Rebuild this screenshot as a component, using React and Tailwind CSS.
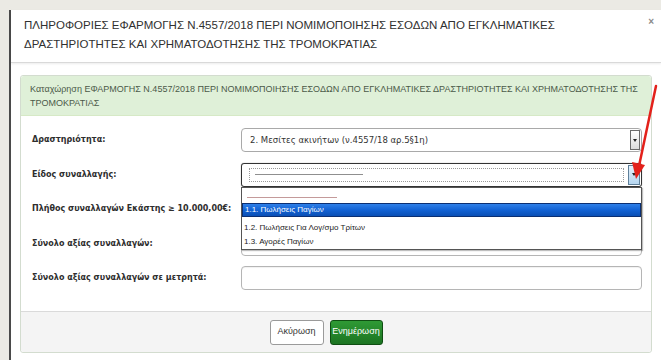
import React from "react";

const sans = { fontFamily: '"Liberation Sans", Arial, sans-serif' };
const dv = { fontFamily: '"DejaVu Sans", Verdana, sans-serif' };

function Label({ children }) {
  return (
    <div className="w-[209px] shrink-0 text-[8px] font-bold text-[#2e2e2e]" style={dv}>
      {children}
    </div>
  );
}

function Row({ label, children }) {
  return (
    <div className="flex items-center h-[24px]">
      <Label>{label}</Label>
      <div className="relative w-[401px] h-full">{children}</div>
    </div>
  );
}

function TextBox() {
  return <div className="w-full h-full rounded-[4px] border border-[#b5b5b5] bg-white shadow-[inset_0_1px_1px_rgba(0,0,0,0.06)]" />;
}

export default function App() {
  return (
    <div className="relative w-[661px] h-[360px] overflow-hidden bg-[#ebeae4] pt-[10px] pl-[9px]" style={sans}>
      <div className="w-[652px] h-[350px] bg-white border-l-2 border-[#4a4a4a] flex flex-col">
        {/* header */}
        <div className="h-[53px] shrink-0 flex justify-between pl-[13px] pr-[7px] pt-[6px] border-b border-[#d9d9d9] shadow-[0_1px_2px_rgba(0,0,0,0.08)]">
          <div className="text-[11.5px] leading-[19px] text-[#303030]">
            ΠΛΗΡΟΦΟΡΙΕΣ ΕΦΑΡΜΟΓΗΣ Ν.4557/2018 ΠΕΡΙ ΝΟΜΙΜΟΠΟΙΗΣΗΣ ΕΣΟΔΩΝ ΑΠΟ ΕΓΚΛΗΜΑΤΙΚΕΣ
            <br />
            ΔΡΑΣΤΗΡΙΟΤΗΤΕΣ ΚΑΙ ΧΡΗΜΑΤΟΔΟΤΗΣΗΣ ΤΗΣ ΤΡΟΜΟΚΡΑΤΙΑΣ
          </div>
          <div className="text-[10px] leading-[10px] font-bold text-[#8a8a8a] pt-[1px]">×</div>
        </div>
        {/* body */}
        <div className="flex-1 px-[9px] pt-[12px]">
          <div className="border border-[#d3dccf] rounded-[3px] flex flex-col h-[278px]">
            <div className="bg-[#dff0d8] border-b border-[#d6e9c6] rounded-t-[3px] pl-[9px] pr-[8px] pt-[6px] pb-[6px] text-[9px] leading-[14px] text-[#4b5a49] h-[40px]">
              Καταχώρηση ΕΦΑΡΜΟΓΗΣ Ν.4557/2018 ΠΕΡΙ ΝΟΜΙΜΟΠΟΙΗΣΗΣ ΕΣΟΔΩΝ ΑΠΟ ΕΓΚΛΗΜΑΤΙΚΕΣ ΔΡΑΣΤΗΡΙΟΤΗΤΕΣ ΚΑΙ ΧΡΗΜΑΤΟΔΟΤΗΣΗΣ ΤΗΣ ΤΡΟΜΟΚΡΑΤΙΑΣ
            </div>
            <div className="flex-1 flex flex-col gap-[10.5px] pl-[11px] pt-[12px]">
              <Row label="Δραστηριότητα:">
                <div className="w-full h-full rounded-[4px] border border-[#a9a9a9] bg-white flex items-center justify-between pl-[8px] pr-[1px]">
                  <span className="text-[8.5px] text-[#333]" style={dv}>2. Μεσίτες ακινήτων (ν.4557/18 αρ.5§1η)</span>
                  <div className="w-[10px] h-[20px] border border-[#6b6b6b] bg-gradient-to-b from-[#ffffff] to-[#dcdcdc] flex items-center justify-center">
                    <svg width="4" height="3" viewBox="0 0 4 3"><path d="M0 0H4L2 3Z" fill="#222" /></svg>
                  </div>
                </div>
              </Row>
              <Row label="Είδος συναλλαγής:">
                <div className="w-full h-full rounded-[3px] border border-[#333] bg-white flex items-center justify-between pl-[7px] pr-[1px] shadow-[0_0_1px_rgba(0,0,0,0.5)]">
                  <div className="flex-1 h-[14px] border border-dotted border-[#9a9a9a] flex items-center pl-[5px] mr-[4px]">
                    <div className="w-[108px] h-[1px] bg-[#8f8f8f]" />
                  </div>
                  <div className="w-[12px] h-[20px] border border-[#5f7f99] bg-gradient-to-b from-[#e4f1fb] to-[#b6d6f0] flex items-center justify-center">
                    <svg width="4" height="3" viewBox="0 0 4 3"><path d="M0 0H4L2 3Z" fill="#222" /></svg>
                  </div>
                </div>
                {/* open list */}
                <div className="absolute left-0 top-full w-[401px] h-[63px] bg-white border border-[#555] z-10 flex flex-col pt-[9px] shadow-[1px_1px_1px_rgba(0,0,0,0.25)]" style={sans}>
                  <div className="h-[1px] w-[90px] ml-[5px] bg-[#c49a9a]" />
                  <div className="mt-[5px] h-[14px] bg-gradient-to-b from-[#2e7fe8] via-[#1262d4] to-[#0a4fb5] border border-[#0b2f73] text-white text-[8px] leading-[12px] pl-[2px]">
                    1.1. Πωλήσεις Παγίων
                  </div>
                  <div className="text-[8px] leading-[15px] text-[#222] pl-[2px] mt-[3px]">1.2. Πωλήσεις Για Λογ/σμο Τρίτων</div>
                  <div className="text-[8px] leading-[13px] text-[#222] pl-[2px]">1.3. Αγορές Παγίων</div>
                </div>
              </Row>
              <Row label="Πλήθος συναλλαγών Εκάστης ≥ 10.000,00€:">
                <TextBox />
              </Row>
              <Row label="Σύνολο αξίας συναλλαγών:">
                <TextBox />
              </Row>
              <Row label="Σύνολο αξίας συναλλαγών σε μετρητά:">
                <TextBox />
              </Row>
            </div>
            <div className="h-[41px] shrink-0 bg-[#f4f4f4] border-t border-[#dadada] rounded-b-[3px] flex items-center justify-center gap-[6px] pr-[20px]">
              <div className="h-[25px] w-[54px] rounded-[3px] border border-[#9a9a9a] bg-white flex items-center justify-center text-[9px] text-[#333]">
                Ακύρωση
              </div>
              <div className="h-[25px] w-[53px] rounded-[3px] border border-[#0f4d12] bg-gradient-to-b from-[#2f9a35] to-[#1c7422] flex items-center justify-center text-[9px] text-white">
                Ενημέρωση
              </div>
            </div>
          </div>
        </div>
      </div>
      {/* red arrow annotation */}
      <svg className="absolute left-0 top-0 pointer-events-none" width="661" height="360" viewBox="0 0 661 360">
        <line x1="656" y1="86" x2="639" y2="166" stroke="#e3211b" strokeWidth="2.5" strokeLinecap="round" />
        <path d="M632 162 L645 165 L636 179 Z" fill="#e3211b" />
      </svg>
    </div>
  );
}
